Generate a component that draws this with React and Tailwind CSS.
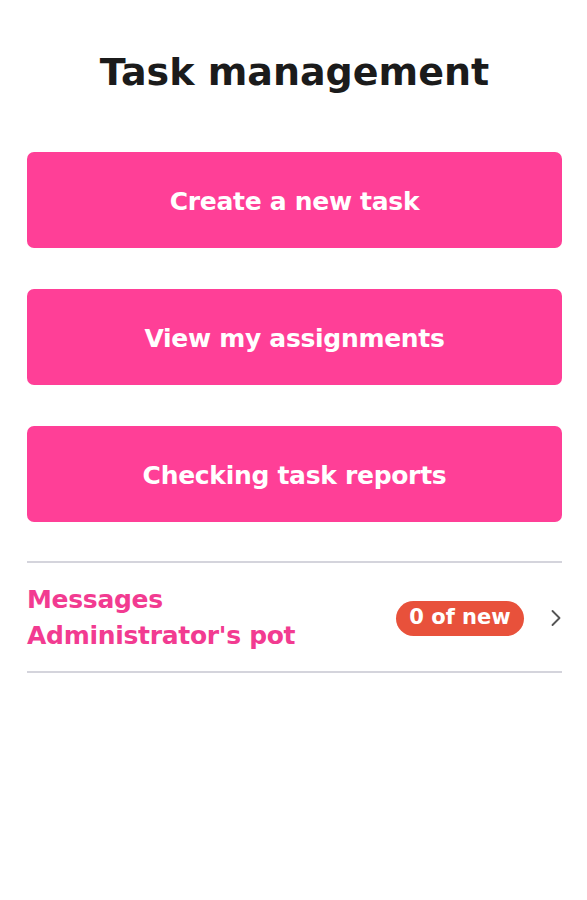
import { ChevronRight } from 'lucide-react'

const ACTIONS = ['Create a new task', 'View my assignments', 'Checking task reports']

export default function App() {
  return (
    <div className="min-h-[900px] bg-white pl-[27px] pr-[25px] font-['DejaVu_Sans',sans-serif]">
      <h1 className="pt-[49px] text-center text-[38px] leading-[46px] font-bold text-[#1b1b1b]">
        Task management
      </h1>

      <div className="mt-[57px] flex flex-col gap-[41px]">
        {ACTIONS.map((label) => (
          <button
            key={label}
            type="button"
            className="flex h-[96px] items-center justify-center rounded-[7px] bg-[#ff3f97] pt-[3px] text-[25px] font-bold tracking-[-0.3px] text-white"
          >
            {label}
          </button>
        ))}
      </div>

      <div className="mt-[39px] flex h-[112px] items-center justify-between border-y-2 border-[#d4d4dc]">
        <div className="pt-[2px] text-[25px] leading-[36px] font-bold tracking-[-0.3px] text-[#f23b91]">
          <p>Messages</p>
          <p>Administrator's pot</p>
        </div>
        <div className="flex items-center gap-[18px] pt-[2px]">
          <span className="flex h-[35px] w-[128px] items-center justify-center rounded-full bg-[#e8513b] text-[21px] font-semibold text-white">
            0 of new
          </span>
          <ChevronRight className="h-[28px] w-[28px] -mr-[8px] text-[#555]" strokeWidth={1.6} />
        </div>
      </div>
    </div>
  )
}
